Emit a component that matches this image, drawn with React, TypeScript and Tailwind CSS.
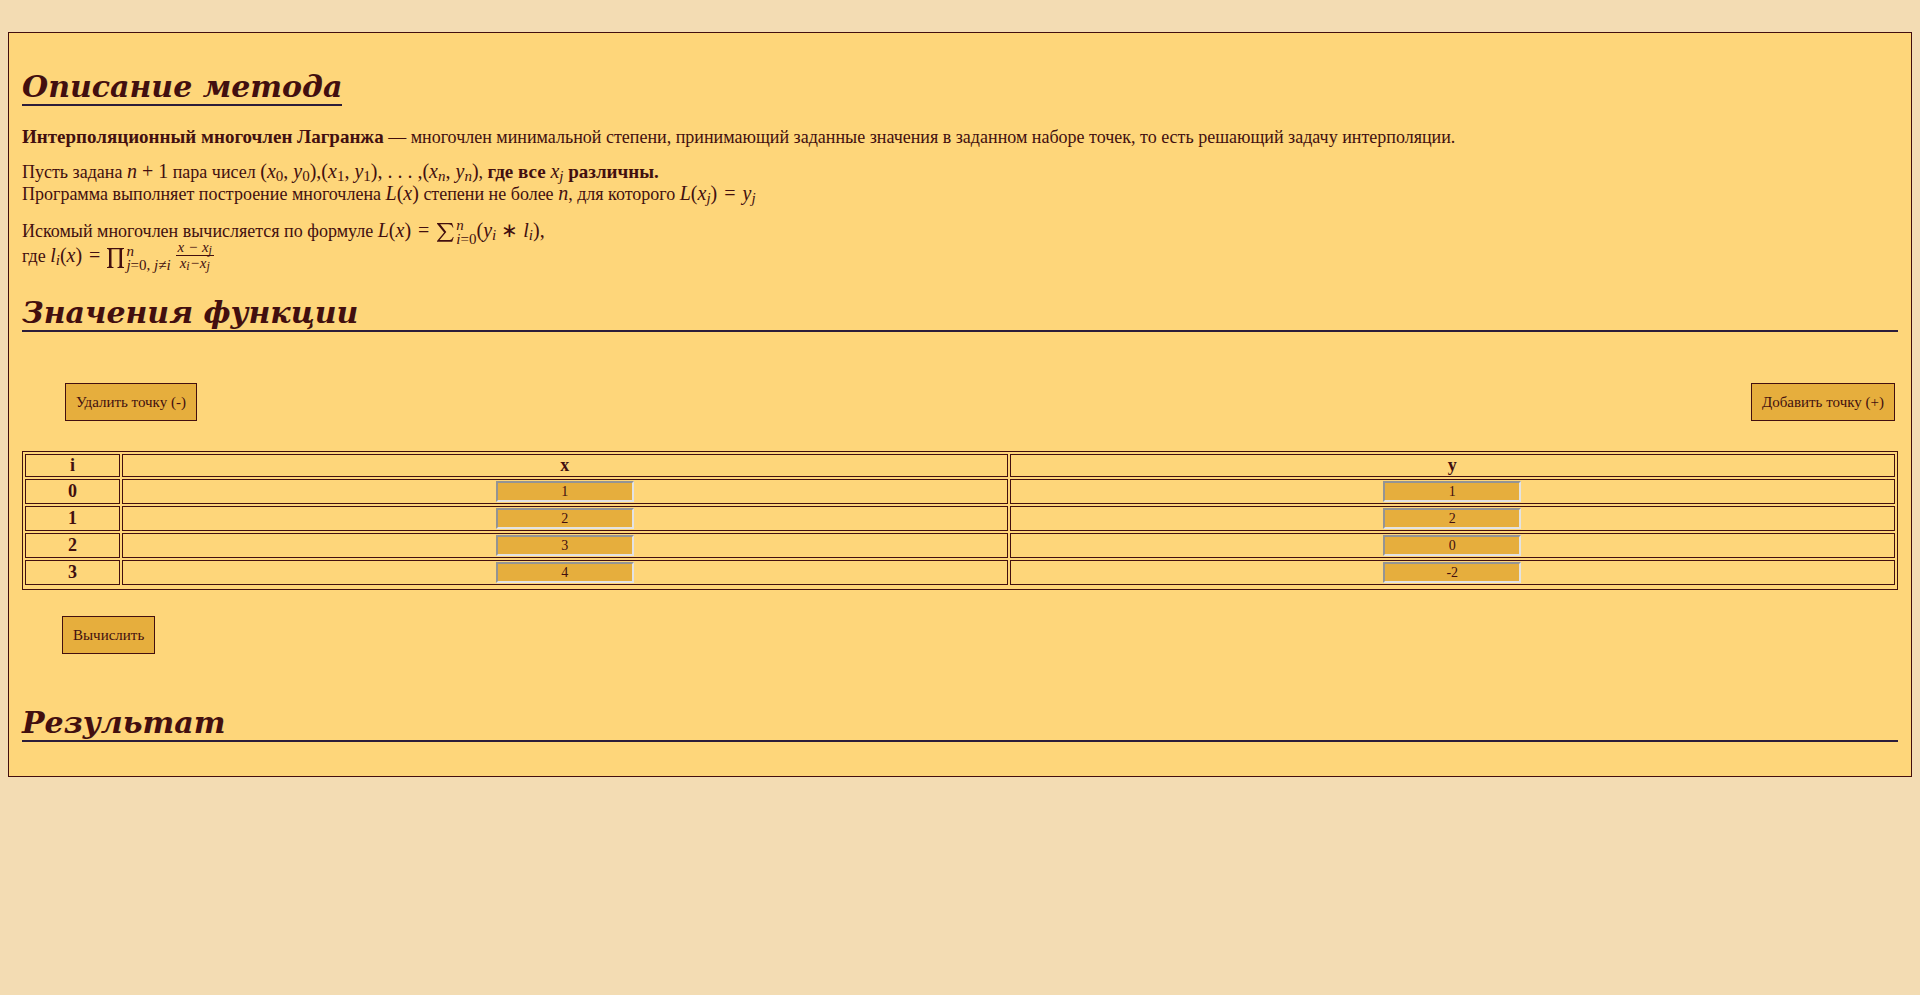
import { useState, type ReactNode } from "react";

type Point = { x: string; y: string };

const initialPoints: Point[] = [
  { x: "1", y: "1" },
  { x: "2", y: "2" },
  { x: "3", y: "0" },
  { x: "4", y: "-2" },
];

function M({ children }: { children: ReactNode }) {
  return <span className="text-[20px] leading-none font-normal whitespace-nowrap">{children}</span>;
}

function V({ children, sub }: { children: ReactNode; sub?: ReactNode }) {
  return (
    <>
      <i>{children}</i>
      {sub !== undefined && <sub className="bottom-[-3px] text-[15px] leading-none">{sub}</sub>}
    </>
  );
}

function Eq() {
  return <span className="mx-[7px]">=</span>;
}

function Sum() {
  return (
    <svg aria-label="∑" viewBox="0 0 18 19" className="mr-0.5 h-[19px] w-[18px]" fill="currentColor">
      <path d="M1 0H16L17.5 4.5H16.7C16 2 14.8 1.2 12 1.2H4.2L10.3 8.9L3.6 17H12.2C15 17 16.2 16.2 16.9 13.9H17.7L16.2 18.7H1V18L8.1 9.5L1 .7Z" />
    </svg>
  );
}

function Product() {
  return (
    <svg aria-label="∏" viewBox="0 0 17 20" className="mr-0.5 h-5 w-[17px]" fill="currentColor">
      <path d="M0 0H17V.9C15.5 1 15 1.3 15 2.5V17.5C15 18.7 15.5 19 17 19.1V20H10.5V19.1C12 19 12.5 18.7 12.5 17.5V1.2H4.5V17.5C4.5 18.7 5 19 6.5 19.1V20H0V19.1C1.5 19 2 18.7 2 17.5V2.5C2 1.3 1.5 1 0 .9Z" />
    </svg>
  );
}

function BigOp({ sign, upper, lower }: { sign: ReactNode; upper: ReactNode; lower: ReactNode }) {
  return (
    <span className="-my-0.5 inline-flex items-center align-middle leading-none">
      {sign}
      <span className="flex flex-col text-[15px] leading-[14px]">
        <span>{upper}</span>
        <span>{lower}</span>
      </span>
    </span>
  );
}

function Small({ children }: { children: ReactNode }) {
  return <sub className="bottom-[-2px] text-[12px]">{children}</sub>;
}

function Heading({ children }: { children: ReactNode }) {
  return (
    <h1 className="border-b-2 border-[#2b1d3a] pt-0.5 font-['DejaVu_Serif',serif] text-[30px] leading-[34px] font-bold italic">
      {children}
    </h1>
  );
}

const button = "border border-[#420f0f] bg-[#e6ae3d] px-2.5 text-[15px] h-[38px] leading-[16px]";
const cell = "border border-[#420f0f] p-px text-center";
const field =
  "block mx-auto h-[21px] w-[138px] border-2 border-t-[#949494] border-l-[#949494] border-r-[#e3e3e3] border-b-[#e3e3e3] bg-[#e6ae3d] text-center text-[14px] leading-[17px]";

export default function App() {
  const [points, setPoints] = useState(initialPoints);

  const update = (row: number, key: keyof Point, value: string) =>
    setPoints(points.map((p, i) => (i === row ? { ...p, [key]: value } : p)));

  return (
    <div className="min-h-screen bg-[#f3dcb3] px-2 pt-8 font-['Liberation_Serif',serif] text-[18px] leading-[21px] text-[#420f0f]">
      <main className="flex flex-col border border-[#420f0f] bg-[#fed67a] px-[13px] pt-[35px] pb-[34px]">
        <div className="flex">
          <Heading>Описание метода</Heading>
        </div>
        <p className="mt-5">
          <b className="text-[19px]">Интерполяционный многочлен Лагранжа</b> — многочлен минимальной
          степени, принимающий заданные значения в заданном наборе точек, то есть решающий задачу
          интерполяции.
        </p>
        <p className="mt-[13px]">
          Пусть задана <M><V>n</V> + 1</M> пара чисел{" "}
          <M>
            (<V sub="0">x</V>, <V sub="0">y</V>),(<V sub="1">x</V>, <V sub="1">y</V>), . . . ,(
            <V sub={<i>n</i>}>x</V>, <V sub={<i>n</i>}>y</V>)
          </M>
          ,{" "}
          <b className="text-[19px]">
            где все <M><V sub={<i>j</i>}>x</V></M> различны.
          </b>
          <br />
          Программа выполняет построение многочлена <M><V>L</V>(<V>x</V>)</M> степени не более{" "}
          <M><V>n</V></M>, для которого <M><V>L</V>(<V sub={<i>j</i>}>x</V>)<Eq /><V sub={<i>j</i>}>y</V></M>
        </p>
        <p className="mt-3.5 leading-[24px]">
          Искомый многочлен вычисляется по формуле{" "}
          <M>
            <V>L</V>(<V>x</V>)<Eq />
            <BigOp sign={<Sum />} upper={<i>n</i>} lower={<><i>i</i>=0</>} />(
            <V sub={<i>i</i>}>y</V> ∗ <V sub={<i>i</i>}>l</V>),
          </M>
          <br />
          где{" "}
          <M>
            <V sub={<i>i</i>}>l</V>(<V>x</V>)<Eq />
            <BigOp sign={<Product />} upper={<i>n</i>} lower={<><i>j</i>=0, <i>j</i>≠<i>i</i></>} />{" "}
            <span className="-mt-[5px] -mb-px inline-flex flex-col text-center align-middle text-[15px] leading-[15px] italic">
              <span className="border-b border-[#420f0f] px-0.5">
                x − x<Small>j</Small>
              </span>
              <span className="px-0.5">
                x<Small>i</Small>−x<Small>j</Small>
              </span>
            </span>
          </M>
        </p>
        <div className="mt-6">
          <Heading>Значения функции</Heading>
        </div>
        <div className="mt-[51px] mr-[3px] ml-[43px] flex justify-between">
          <button type="button" className={button} onClick={() => setPoints(points.slice(0, -1))}>
            Удалить точку (-)
          </button>
          <button
            type="button"
            className={button}
            onClick={() => setPoints([...points, { x: "", y: "" }])}
          >
            Добавить точку (+)
          </button>
        </div>
        <table className="mt-[30px] w-full table-fixed border-separate border-spacing-[2px] border border-[#420f0f] leading-[19px]">
          <colgroup>
            <col className="w-[95px]" />
            <col />
            <col />
          </colgroup>
          <thead>
            <tr>
              <th className={cell}>i</th>
              <th className={cell}>x</th>
              <th className={cell}>y</th>
            </tr>
          </thead>
          <tbody>
            {points.map((p, i) => (
              <tr key={i}>
                <th className={cell}>{i}</th>
                <td className={cell}>
                  <input aria-label={`x ${i}`} className={field} value={p.x} onChange={(e) => update(i, "x", e.target.value)} />
                </td>
                <td className={cell}>
                  <input aria-label={`y ${i}`} className={field} value={p.y} onChange={(e) => update(i, "y", e.target.value)} />
                </td>
              </tr>
            ))}
            <tr />
          </tbody>
        </table>
        <div className="mt-[26px] ml-10 flex">
          <button type="button" className={button}>Вычислить</button>
        </div>
        <div className="mt-[50px]">
          <Heading>Результат</Heading>
        </div>
      </main>
    </div>
  );
}
